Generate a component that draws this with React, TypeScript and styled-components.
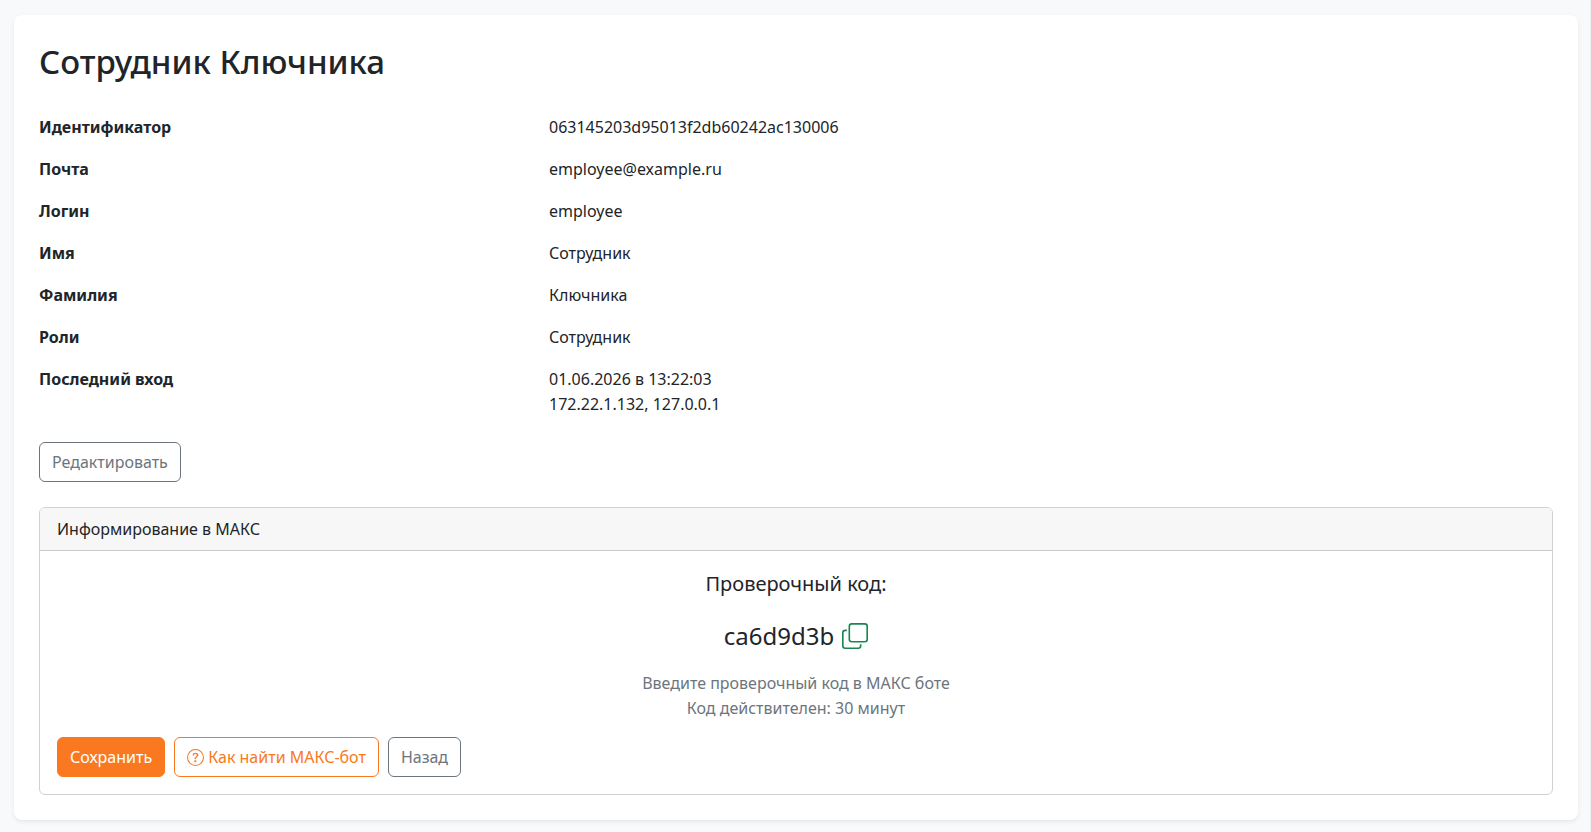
import React from "react";
import styled, { createGlobalStyle } from "styled-components";
import { BsCopy, BsQuestionCircle } from "react-icons/bs";

const GlobalStyle = createGlobalStyle`
  *, *::before, *::after { box-sizing: border-box; }
  body {
    margin: 0;
    background: #f8f9fb;
    color: #212529;
    font-family: "Segoe UI", "Noto Sans", sans-serif;
    font-size: 16px;
    line-height: 25px;
  }
`;

const Page = styled.main`
  min-height: 100vh;
  padding: 15px 12px 12px 14px;
  border-right: 1px solid #eeeff1;
`;

const Card = styled.section`
  padding: 25px;
  border-radius: 8px;
  background: #fff;
  box-shadow: 0 2px 4px rgba(0, 0, 0, 0.075);
`;

const Title = styled.h1`
  margin: 0 0 31px;
  font-size: 33px;
  font-weight: 500;
  line-height: 44px;
`;

const Details = styled.dl`
  display: grid;
  grid-template-columns: 1fr 2fr;
  gap: 17px 8px;
  margin: 0 0 25px;
`;

const Term = styled.dt`
  font-weight: 700;
`;

const Value = styled.dd`
  margin: 0;
`;

const Line = styled.div``;

type Variant = "primary" | "outlinePrimary" | "outlineSecondary";

const variants: Record<Variant, { text: string; border: string; background: string }> = {
  primary: { text: "#fff", border: "#fa7920", background: "#fa7920" },
  outlinePrimary: { text: "#fa7920", border: "#fa7920", background: "transparent" },
  outlineSecondary: { text: "#6c757d", border: "#6c757d", background: "transparent" },
};

const Button = styled.button<{ $variant: Variant }>`
  display: inline-flex;
  align-items: center;
  gap: 4px;
  padding: 7px 12px 6px;
  border: 1px solid ${({ $variant }) => variants[$variant].border};
  border-radius: 6px;
  background: ${({ $variant }) => variants[$variant].background};
  color: ${({ $variant }) => variants[$variant].text};
  font: inherit;
  cursor: pointer;
`;

const Panel = styled.section`
  margin-top: 25px;
  border: 1px solid #d0d1d2;
  border-radius: 6px;
  overflow: hidden;
`;

const PanelHeader = styled.header`
  padding: 9px 17px 8px;
  border-bottom: 1px solid #c9cacb;
  background: #f7f7f7;
`;

const PanelBody = styled.div`
  padding: 17px;
`;

const CodeBlock = styled.div`
  display: flex;
  flex-direction: column;
  align-items: center;
  gap: 17px;
  margin-bottom: 16px;
  text-align: center;
`;

const CodeLabel = styled.div`
  font-size: 20px;
  line-height: 32px;
`;

const CodeRow = styled.div`
  display: flex;
  align-items: center;
  gap: 8px;
  font-size: 24px;
  line-height: 37px;
`;

const CopyButton = styled.button`
  display: flex;
  padding: 0;
  border: 0;
  background: none;
  color: #198754;
  font-size: 26px;
  cursor: pointer;
`;

const Hint = styled.p`
  margin: 0;
  color: #6c757d;
`;

const Actions = styled.div`
  display: flex;
  flex-wrap: wrap;
  gap: 9px;
`;

const details: { term: string; lines: string[] }[] = [
  { term: "Идентификатор", lines: ["063145203d95013f2db60242ac130006"] },
  { term: "Почта", lines: ["employee@example.ru"] },
  { term: "Логин", lines: ["employee"] },
  { term: "Имя", lines: ["Сотрудник"] },
  { term: "Фамилия", lines: ["Ключника"] },
  { term: "Роли", lines: ["Сотрудник"] },
  { term: "Последний вход", lines: ["01.06.2026 в 13:22:03", "172.22.1.132, 127.0.0.1"] },
];

export default function App() {
  return (
    <>
      <GlobalStyle />
      <Page>
        <Card>
          <Title>Сотрудник Ключника</Title>
          <Details>
            {details.map(({ term, lines }) => (
              <React.Fragment key={term}>
                <Term>{term}</Term>
                <Value>
                  {lines.map((line) => (
                    <Line key={line}>{line}</Line>
                  ))}
                </Value>
              </React.Fragment>
            ))}
          </Details>
          <Button type="button" $variant="outlineSecondary">Редактировать</Button>
          <Panel>
            <PanelHeader>Информирование в МАКС</PanelHeader>
            <PanelBody>
              <CodeBlock>
                <CodeLabel>Проверочный код:</CodeLabel>
                <CodeRow>
                  ca6d9d3b
                  <CopyButton type="button" aria-label="Скопировать код">
                    <BsCopy />
                  </CopyButton>
                </CodeRow>
                <Hint>
                  Введите проверочный код в МАКС боте
                  <br />
                  Код действителен: 30 минут
                </Hint>
              </CodeBlock>
              <Actions>
                <Button type="button" $variant="primary">Сохранить</Button>
                <Button type="button" $variant="outlinePrimary">
                  <BsQuestionCircle size={17} />
                  Как найти МАКС-бот
                </Button>
                <Button type="button" $variant="outlineSecondary">Назад</Button>
              </Actions>
            </PanelBody>
          </Panel>
        </Card>
      </Page>
    </>
  );
}
